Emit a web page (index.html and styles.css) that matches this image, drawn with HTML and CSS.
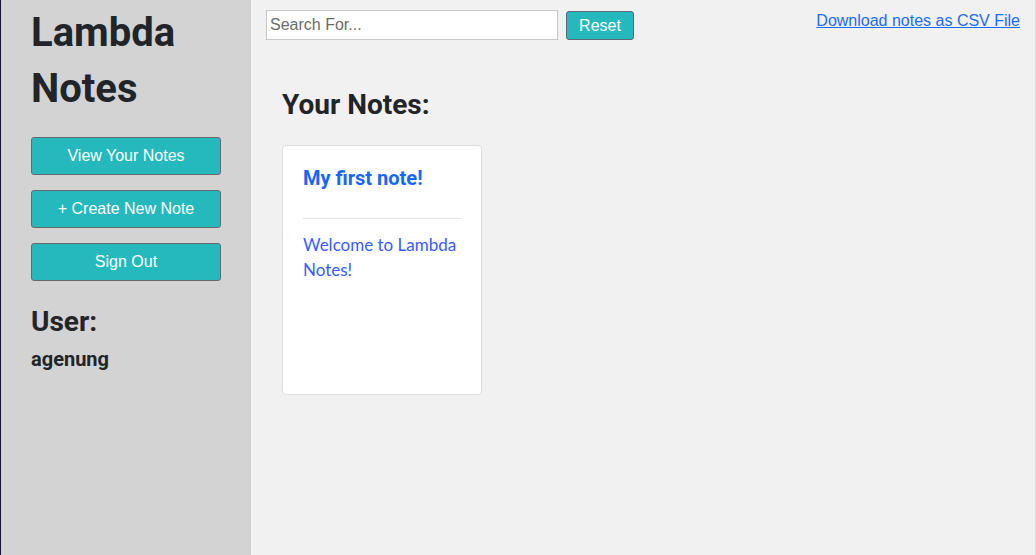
FILE: index.html
```html
<!DOCTYPE html>
<html>
<head>
<meta charset="utf-8">
<title>Lambda Notes</title>
<link rel="stylesheet" href="styles.css">
</head>
<body>
<div class="app">
  <aside class="sidebar">
    <h1 class="brand">Lambda Notes</h1>
    <div class="nav">
      <button class="nav-btn">View Your Notes</button>
      <button class="nav-btn">+ Create New Note</button>
      <button class="nav-btn">Sign Out</button>
    </div>
    <h2 class="user-label">User:</h2>
    <div class="user-name">agenung</div>
  </aside>
  <main class="main">
    <div class="topbar">
      <input class="search" type="text" placeholder="Search For...">
      <button class="reset">Reset</button>
      <a class="csv" href="#">Download notes as CSV File</a>
    </div>
    <h2 class="section-title">Your Notes:</h2>
    <div class="notes">
      <div class="note-card">
        <h3 class="note-title">My first note!</h3>
        <hr class="note-rule">
        <p class="note-body">Welcome to Lambda Notes!</p>
      </div>
    </div>
  </main>
</div>
</body>
</html>
```

FILE: styles.css
```css
html, body {
  margin: 0;
  padding: 0;
  height: 100%;
}

body {
  font-family: "Liberation Sans", Arial, sans-serif;
  background: #f1f1f1;
}

.app {
  display: flex;
  min-height: 555px;
  height: 100%;
  box-sizing: border-box;
  border-left: 1px solid #1b0a3c;
  border-right: 1px solid #dcdcdc;
}

.sidebar {
  width: 250px;
  flex: none;
  background: #d3d3d3;
  padding: 5px 0 0 30px;
  box-sizing: border-box;
}

.brand {
  margin: 0;
  font-family: Roboto, sans-serif;
  font-weight: 700;
  font-size: 40px;
  line-height: 56px;
  color: #212529;
  width: 170px;
}

.nav {
  display: flex;
  flex-direction: column;
  gap: 15px;
  margin-top: 20px;
}

.nav-btn {
  width: 190px;
  height: 38px;
  background: #25b9bd;
  border: 1px solid #666a6e;
  border-radius: 3px;
  color: #fff;
  font-family: "Liberation Sans", Arial, sans-serif;
  font-size: 16px;
  padding: 0;
  cursor: pointer;
}

.user-label {
  margin: 24px 0 0;
  font-family: Roboto, sans-serif;
  font-weight: 700;
  font-size: 28px;
  line-height: 1.2;
  color: #212529;
}

.user-name {
  margin-top: 8px;
  font-family: Roboto, sans-serif;
  font-weight: 700;
  font-size: 20px;
  line-height: 1.2;
  color: #212529;
}

.main {
  flex: 1;
  padding: 10px 15px 0 15px;
  box-sizing: border-box;
}

.topbar {
  display: flex;
  align-items: flex-start;
}

.search {
  width: 292px;
  height: 30px;
  box-sizing: border-box;
  border: 1px solid #c8c8c8;
  background: #fff;
  padding: 0 3px;
  font-family: "Liberation Sans", Arial, sans-serif;
  font-size: 16px;
  color: #333;
  outline: none;
}

.search::placeholder {
  color: #6b6b6b;
}

.reset {
  margin: 1px 0 0 8px;
  width: 68px;
  height: 29px;
  background: #25b9bd;
  border: 1px solid #5a6a6e;
  border-radius: 3px;
  color: #fff;
  font-family: "Liberation Sans", Arial, sans-serif;
  font-weight: 400;
  font-size: 16px;
  padding: 0;
}

.csv {
  margin: 2px 0 0 auto;
  font-size: 16px;
  color: #1a6cff;
  text-decoration: underline;
}

.section-title {
  margin: 48px 0 0 16px;
  font-family: Roboto, sans-serif;
  font-weight: 700;
  font-size: 28px;
  line-height: 1.2;
  color: #212529;
}

.notes {
  display: flex;
  margin: 23px 0 0 16px;
}

.note-card {
  width: 200px;
  height: 250px;
  box-sizing: border-box;
  background: #fff;
  border: 1px solid #dedede;
  border-radius: 4px;
  padding: 20px;
}

.note-title {
  margin: 0;
  font-family: Roboto, sans-serif;
  font-weight: 700;
  font-size: 20px;
  line-height: 24px;
  color: #1766ff;
}

.note-rule {
  border: 0;
  border-top: 1px solid #e4e4e4;
  margin: 28px 0 0;
}

.note-body {
  margin: 13px 0 0;
  font-family: Lato, sans-serif;
  font-weight: 400;
  font-size: 17px;
  line-height: 25px;
  color: #3a5bff;
}
```
